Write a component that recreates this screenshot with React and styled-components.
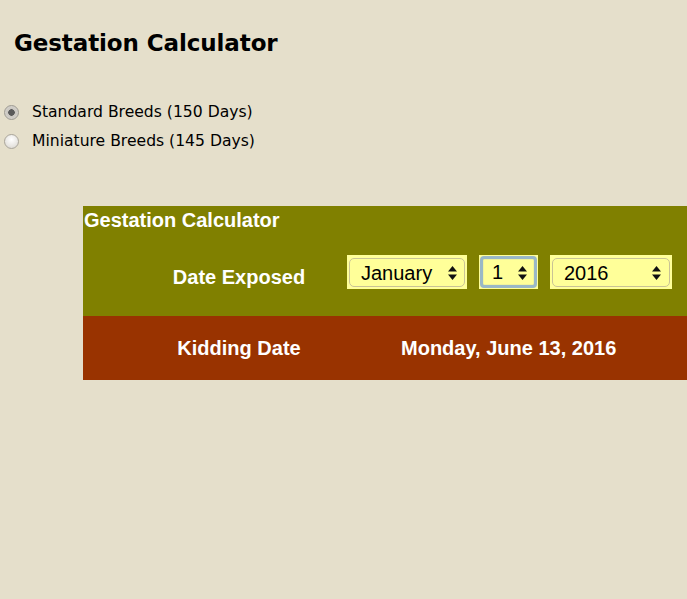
import React, { useState } from "react"
import styled, { createGlobalStyle } from "styled-components"

const GlobalStyle = createGlobalStyle`
  html, body {
    margin: 0;
    padding: 0;
    background: #e5dfcb;
  }
  body {
    font-family: "DejaVu Sans", Verdana, sans-serif;
    overflow: hidden;
  }
`

const Page = styled.div`
  width: 687px;
  height: 599px;
  background: #e5dfcb;
  overflow: hidden;
`

const Title = styled.h1`
  margin: 0;
  padding: 29px 0 0 14px;
  font-family: "DejaVu Sans", Verdana, sans-serif;
  font-size: 23px;
  font-weight: bold;
  color: #000;
  letter-spacing: -0.1px;
  line-height: 28px;
`

const BreedList = styled.div`
  display: flex;
  flex-direction: column;
  gap: 5px;
  margin-top: 43px;
  padding-left: 4px;
`

const BreedOption = styled.label`
  display: flex;
  align-items: center;
  gap: 13px;
  font-family: "DejaVu Sans", Verdana, sans-serif;
  font-size: 15.6px;
  color: #000;
  height: 24px;
`

const Radio = styled.input`
  appearance: none;
  margin: 0;
  width: 15px;
  height: 15px;
  border-radius: 50%;
  border: 1px solid #a9a59b;
  background: radial-gradient(circle at 50% 35%, #ffffff 0%, #e8e6e2 60%, #d4d1cb 100%);

  &:checked {
    background: radial-gradient(circle at 50% 50%, #5a5a5a 0 3px, #c9c6c0 3.5px, #dcd9d3 100%);
    border-color: #9d9a92;
  }
`

const Panel = styled.div`
  margin: 53px 0 0 83px;
  width: 640px;
`

const Top = styled.div`
  background: #808000;
  padding-top: 3px;
`

const PanelTitle = styled.div`
  font-family: "Liberation Sans", Arial, sans-serif;
  font-weight: bold;
  font-size: 20px;
  color: #fff;
  padding-left: 1px;
  line-height: 23px;
`

const Row = styled.div`
  display: grid;
  grid-template-columns: 257px 1fr;
  align-items: center;
  height: ${p => p.h}px;
  background: ${p => p.bg || "transparent"};
`

const Label = styled.div`
  font-family: "Liberation Sans", Arial, sans-serif;
  font-weight: bold;
  font-size: 20px;
  color: #fff;
  text-align: center;
  padding-left: 55px;
  padding-top: ${p => p.down || 0}px;
`

const Result = styled.div`
  font-family: "Liberation Sans", Arial, sans-serif;
  font-weight: bold;
  font-size: 20px;
  color: #fff;
  padding-left: 61px;
`

const Selects = styled.div`
  display: flex;
  gap: 12px;
  padding-left: 7px;
  margin-top: -4px;
`

const SelectBox = styled.span`
  position: relative;
  display: inline-flex;
  width: ${p => p.w}px;
  height: 34px;
  flex: none;
  box-sizing: border-box;
  padding: ${p => (p.focused ? "1px" : "3px 2px 2px 2px")};
  background: #ffff99;
`

const Select = styled.select`
  appearance: none;
  width: 100%;
  height: 100%;
  margin: 0;
  box-sizing: border-box;
  background: transparent;
  border: 1px solid #c9c396;
  border-radius: 5px;
  font-family: "Liberation Sans", Arial, sans-serif;
  font-size: 20px;
  color: #000;
  padding: 0 0 0 ${p => p.pl}px;
  outline: none;

  ${p => p.focused && `
    border: 3px solid #9ab8c6;
    border-radius: 4px;
    box-shadow: inset 0 0 1px #6f93a8;
    padding-left: ${p.pl - 2}px;
  `}
`

const Arrows = styled.svg`
  position: absolute;
  right: ${p => p.r}px;
  top: 11px;
  pointer-events: none;
`

const months = ["January", "February", "March", "April", "May", "June", "July", "August", "September", "October", "November", "December"]

const Dropdown = ({ w, pl, r, value, options, focused }) => (
  <SelectBox w={w} focused={focused}>
    <Select pl={pl} focused={focused} defaultValue={value}>
      {options.map(o => <option key={o} value={o}>{o}</option>)}
    </Select>
    <Arrows r={r} width="9" height="14" viewBox="0 0 9 14">
      <path d="M4.5 0 L9 5.5 H0 Z" fill="#111" />
      <path d="M4.5 14 L9 8.5 H0 Z" fill="#111" />
    </Arrows>
  </SelectBox>
)

const App = () => {
  const [breed, setBreed] = useState("standard")
  const days = Array.from({ length: 31 }, (_, i) => String(i + 1))
  const years = ["2015", "2016", "2017"]

  return (
    <Page>
      <GlobalStyle />
      <Title>Gestation Calculator</Title>
      <BreedList>
        <BreedOption>
          <Radio type="radio" name="breed" checked={breed === "standard"} onChange={() => setBreed("standard")} />
          Standard Breeds (150 Days)
        </BreedOption>
        <BreedOption>
          <Radio type="radio" name="breed" checked={breed === "mini"} onChange={() => setBreed("mini")} />
          Miniature Breeds (145 Days)
        </BreedOption>
      </BreedList>
      <Panel>
        <Top>
          <PanelTitle>Gestation Calculator</PanelTitle>
          <Row h={84}>
            <Label down={6}>Date Exposed</Label>
            <Selects>
              <Dropdown w={120} pl={11} r={10} value="January" options={months} />
              <Dropdown w={59} pl={11} r={11} value="1" options={days} focused />
              <Dropdown w={122} pl={11} r={11} value="2016" options={years} />
            </Selects>
          </Row>
        </Top>
        <Row h={64} bg="#993300">
          <Label>Kidding Date</Label>
          <Result>Monday, June 13, 2016</Result>
        </Row>
      </Panel>
    </Page>
  )
}

export default App
